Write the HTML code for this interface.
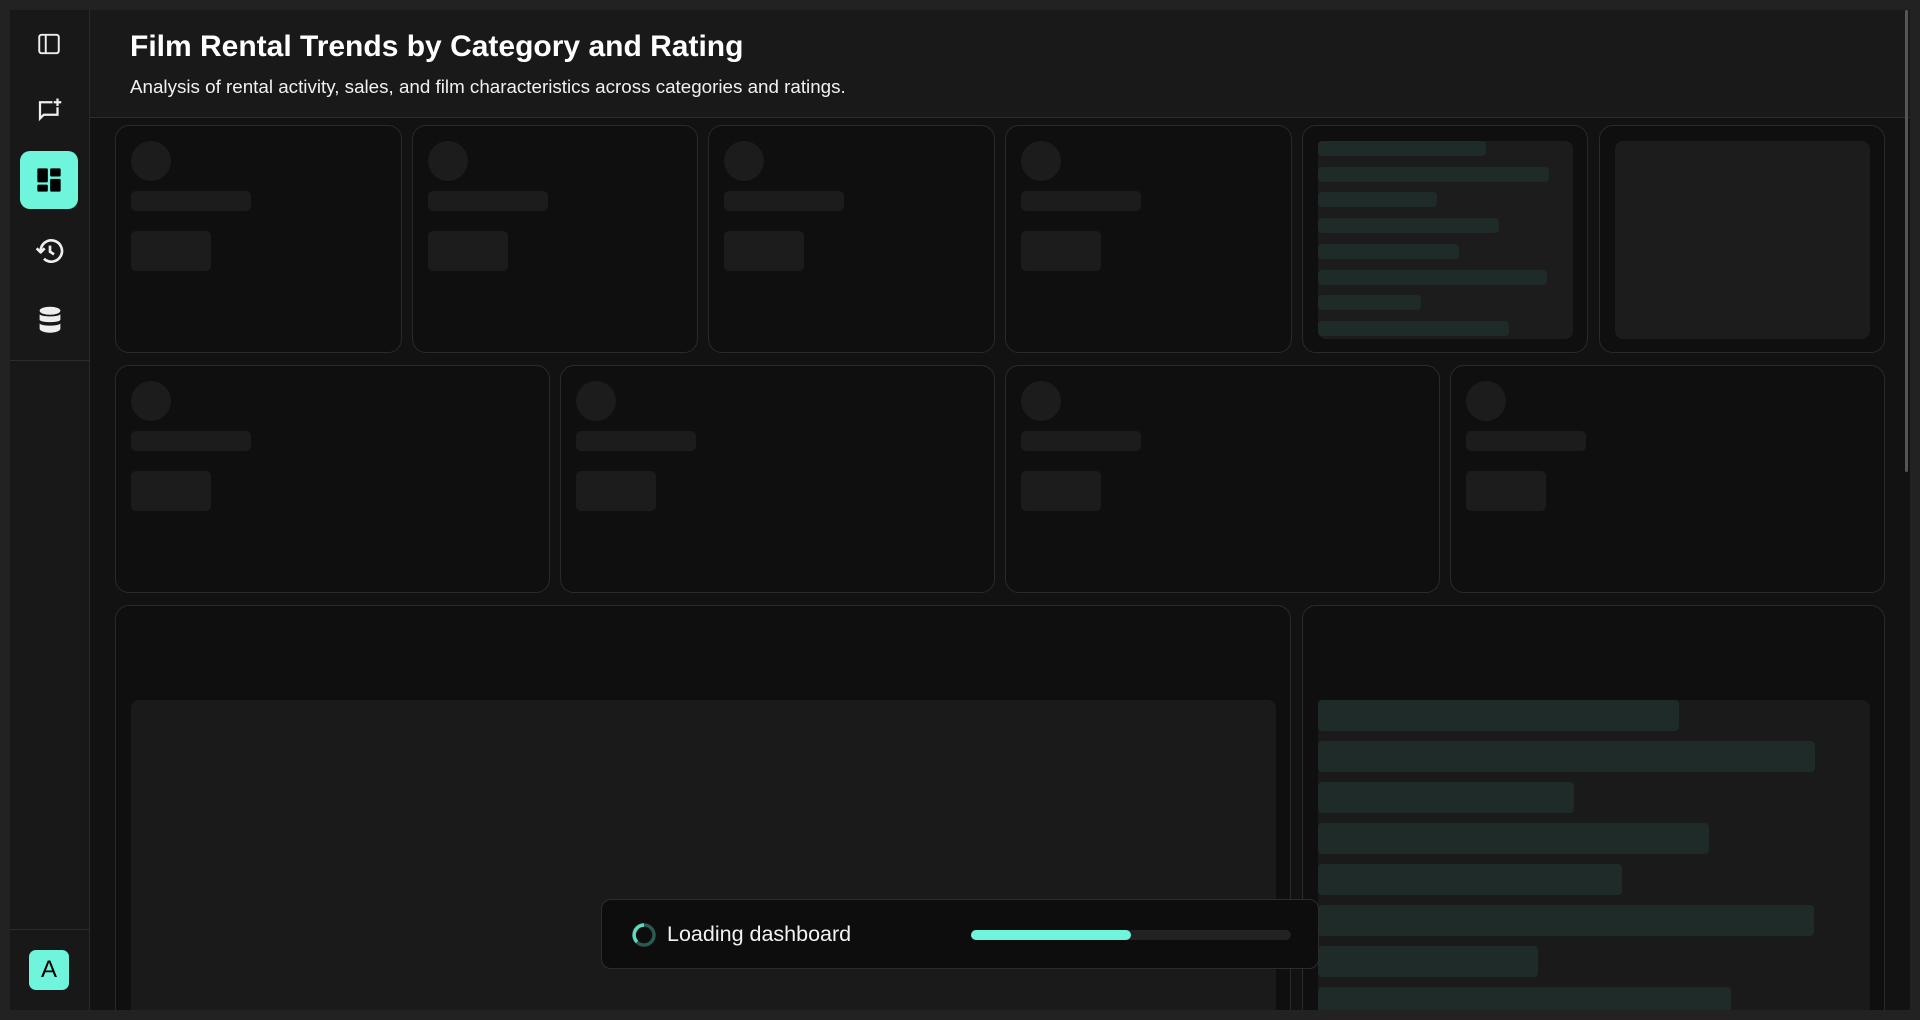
<!DOCTYPE html>
<html><head><meta charset="utf-8"><style>
*{box-sizing:border-box;margin:0;padding:0}
body{width:1920px;height:1020px;background:#222;overflow:hidden;font-family:"Liberation Sans",sans-serif;position:relative}
.app{position:absolute;left:10px;top:10px;width:1900px;height:1000px;background:#121212;overflow:hidden}
.side{position:absolute;left:0;top:0;width:80px;height:1000px;background:#181818;border-right:1px solid #2a2a2a}
.hdr{position:absolute;left:80px;top:0;right:0;height:108px;background:#191919;border-bottom:1px solid #2c2c2c}
.hdr h1{position:absolute;left:40px;top:20px;font-size:30px;font-weight:bold;color:#fff;white-space:nowrap}
.hdr p{position:absolute;left:40px;top:66px;font-size:18.8px;color:#f0f0f0;white-space:nowrap}
.card{position:absolute;background:#0f0f0f;border:1px solid #2a2a2a;border-radius:14px;overflow:hidden}
.sk{position:absolute;background:#1c1c1c;border-radius:5px}
.g{position:absolute;background:#1e2b28;border-radius:4px}
.ic{position:absolute}
</style></head><body>
<div class="app">
<div class="side">
 <svg class="ic" style="left:26px;top:21px" width="26" height="26" viewBox="0 0 24 24" fill="none" stroke="#eee" stroke-width="1.8"><rect x="3" y="3.5" width="18" height="17" rx="2"/><line x1="9" y1="3.5" x2="9" y2="20.5"/></svg>
 <svg class="ic" style="left:25px;top:86px" width="30" height="30" viewBox="0 0 24 24" fill="none" stroke="#eee" stroke-width="1.8"><path d="M14 5H4v13l3-3h11v-6"/><path d="M18 2v6M15 5h6"/></svg>
 <div style="position:absolute;left:10px;top:141px;width:58px;height:58px;background:#6ef5dc;border-radius:10px"></div>
 <svg class="ic" style="left:25px;top:156px" width="28" height="28" viewBox="0 0 24 24" fill="#000"><rect x="2" y="2" width="9" height="12" rx="1"/><rect x="13" y="2" width="9" height="7" rx="1"/><rect x="2" y="16" width="9" height="6" rx="1"/><rect x="13" y="11" width="9" height="11" rx="1"/></svg>
 <svg class="ic" style="left:24px;top:225px" width="32" height="32" viewBox="0 0 24 24" fill="none" stroke="#eee" stroke-width="2"><path d="M5 12a8 8 0 1 1 2.5 5.8"/><path d="M2 10l3 3 3-3" stroke-linejoin="round"/><path d="M12 8v4.5l3 2"/></svg>
 <svg class="ic" style="left:26px;top:295px" width="28" height="30" viewBox="0 0 24 26" fill="#eee"><ellipse cx="12" cy="5" rx="9" ry="3.5"/><path d="M3 8c2 2.5 16 2.5 18 0v5c-2 2.5-16 2.5-18 0z"/><path d="M3 16c2 2.5 16 2.5 18 0v4.5c0 2-4 3.5-9 3.5s-9-1.5-9-3.5z"/></svg>
 <div style="position:absolute;left:0;top:350px;width:80px;height:1px;background:#2c2c2c"></div>
 <div style="position:absolute;left:0;top:919px;width:80px;height:1px;background:#2c2c2c"></div>
 <div style="position:absolute;left:19px;top:940px;width:40px;height:40px;background:#6ef5dc;border-radius:7px;color:#000;font-size:24px;text-align:center;line-height:40px">A</div>
</div>
<div class="hdr"><h1>Film Rental Trends by Category and Rating</h1><p>Analysis of rental activity, sales, and film characteristics across categories and ratings.</p></div>
<div style="position:absolute;right:2px;top:0;width:3px;height:462px;background:#555;border-radius:2px"></div>
<div id="c"></div>
</div>
<div style="position:absolute;left:601px;top:899px;width:718px;height:70px;background:#0d0d0d;border:1px solid #2c2c2c;border-radius:10px">
 <svg style="position:absolute;left:29px;top:22px" width="26" height="26" viewBox="0 0 26 26"><circle cx="13" cy="13" r="10" fill="none" stroke="#2a5a52" stroke-width="3.5"/><path d="M13 3a10 10 0 0 0-7 17" fill="none" stroke="#5fd8c2" stroke-width="3.5"/></svg>
 <div style="position:absolute;left:65px;top:22px;font-size:21.5px;color:#f2f2f2;white-space:nowrap">Loading dashboard</div>
 <div style="position:absolute;left:369px;top:30px;width:320px;height:10px;background:#222;border-radius:5px"><div style="width:160px;height:10px;background:#6ef5dc;border-radius:5px"></div></div>
</div>
<script>
var c=document.getElementById('c'),h='';
function card(x,y,w,hh,inner){h+='<div class="card" style="left:'+(x-10)+'px;top:'+(y-10)+'px;width:'+w+'px;height:'+hh+'px">'+inner+'</div>';}
var kpi='<div class="sk" style="left:15px;top:15px;width:40px;height:40px;border-radius:50%"></div><div class="sk" style="left:15px;top:65px;width:120px;height:20px"></div><div class="sk" style="left:15px;top:105px;width:80px;height:40px"></div>';
var cw=286.7;
for(var i=0;i<4;i++)card(115+i*(cw+10),125,cw,228,kpi);
var g1=[168,231,119,181,141,229,103,191],s='<div class="sk" style="left:15px;top:15px;width:255px;height:198px;border-radius:8px"></div>';
for(i=0;i<8;i++)s+='<div class="g" style="left:15px;top:'+(15+i*25.7)+'px;width:'+g1[i]+'px;height:15px"></div>';
card(115+4*(cw+10),125,cw,228,s);
card(115+5*(cw+10),125,cw,228,'<div class="sk" style="left:15px;top:15px;width:255px;height:198px;border-radius:8px"></div>');
for(i=0;i<4;i++)card(115+i*445,365,435,228,kpi);
card(115,605,1176,420,'<div class="sk" style="left:15px;top:94px;width:1145px;height:400px;border-radius:8px;background:#1a1a1a"></div>');
var g2=[361,497,256,391,304,496,220,413];s='<div class="sk" style="left:15px;top:94px;width:552px;height:400px;border-radius:8px;background:#1a1a1a"></div>';
for(i=0;i<8;i++)s+='<div class="g" style="left:15px;top:'+(94+i*41)+'px;width:'+g2[i]+'px;height:31px"></div>';
card(1302,605,583,420,s);
c.innerHTML=h;
</script>
</body></html>
